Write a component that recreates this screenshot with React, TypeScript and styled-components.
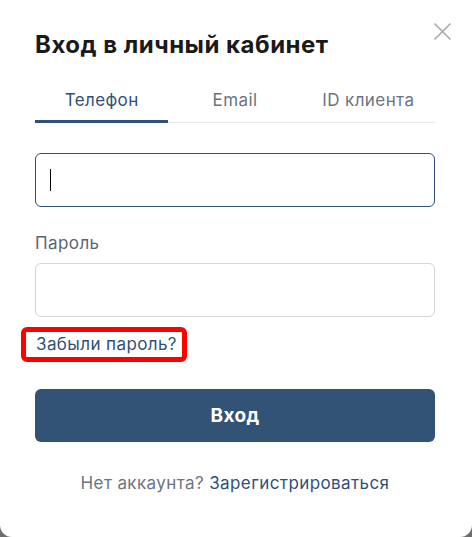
import styled, { createGlobalStyle } from 'styled-components';
import { useState } from 'react';

const Palette = {
  Blue: '#2f5078',
  Button: '#325276',
  Title: '#1a1a1a',
  Gray: '#6b7480',
  Label: '#5b6472',
  Line: '#e6e8eb',
  Border: '#d3d6dc',
  Close: '#a3a8b0',
};

const GlobalStyle = createGlobalStyle`
  html, body {
    margin: 0;
    padding: 0;
    background: #6e6e6e;
  }
  body {
    font-family: Inter, "Noto Sans", sans-serif;
    letter-spacing: 0.4px;
  }
  * { box-sizing: border-box; }
`;

const tabs = ['Телефон', 'Email', 'ID клиента'];

const App = () => {
  const [active, setActive] = useState(0);
  const [phone, setPhone] = useState('');

  return (
    <>
      <GlobalStyle />
      <Card>
        <Header>
          <Title>Вход в личный кабинет</Title>
          <Close aria-label="Закрыть">
            <svg width="19" height="19" viewBox="0 0 19 19">
              <path d="M1.5 1.5 L17.5 17.5 M17.5 1.5 L1.5 17.5" stroke={Palette.Close} strokeWidth="1.6" fill="none" />
            </svg>
          </Close>
        </Header>
        <Tabs>
          {tabs.map((t, i) => (
            <Tab key={t} $active={i === active} onClick={() => setActive(i)}>
              {t}
            </Tab>
          ))}
        </Tabs>
        <Form>
          <Field>
            <Input $focused value={phone} onChange={(e) => setPhone(e.target.value)} />
            {!phone && <Caret />}
          </Field>
          <Label>Пароль</Label>
          <Input type="password" />
          <ForgotRow>
            <Highlight>
              <Link href="#">Забыли пароль?</Link>
            </Highlight>
          </ForgotRow>
          <Submit>Вход</Submit>
        </Form>
        <Footer>
          Нет аккаунта? <Link href="#">Зарегистрироваться</Link>
        </Footer>
      </Card>
    </>
  );
};

export default App;

const Card = styled.div`
  width: 472px;
  height: 537px;
  background: #fff;
  border-radius: 0 0 12px 12px;
  padding: 28px 37px 0 35px;
`;
const Header = styled.div`
  display: flex;
  justify-content: space-between;
  align-items: flex-start;
`;
const Title = styled.h1`
  margin: 0;
  font-size: 24px;
  line-height: 34px;
  font-weight: 700;
  color: ${Palette.Title};
  letter-spacing: 0.5px;
`;
const Close = styled.button`
  border: none;
  background: none;
  padding: 0;
  margin: -6px -17px 0 0;
  width: 19px;
  height: 19px;
  cursor: pointer;
`;
const Tabs = styled.div`
  display: grid;
  grid-template-columns: repeat(3, 1fr);
  width: 400px;
  margin-top: 21px;
  border-bottom: 1px solid ${Palette.Line};
`;
const Tab = styled.div<{ $active?: boolean }>`
  text-align: center;
  font-size: 17px;
  line-height: 22px;
  padding: 6px 0 11px;
  color: ${(p) => (p.$active ? Palette.Blue : Palette.Gray)};
  box-shadow: ${(p) => (p.$active ? `inset 0 -3px 0 ${Palette.Blue}` : 'none')};
  margin-bottom: ${(p) => (p.$active ? '-1px' : '0')};
  cursor: pointer;
`;
const Form = styled.div`
  display: flex;
  flex-direction: column;
  width: 400px;
  margin-top: 30px;
`;
const Field = styled.div`
  position: relative;
`;
const Caret = styled.span`
  position: absolute;
  left: 15px;
  top: 16px;
  width: 1px;
  height: 22px;
  background: #000;
  pointer-events: none;
`;
const Input = styled.input<{ $focused?: boolean }>`
  display: block;
  width: 100%;
  height: 54px;
  border: 1px solid ${(p) => (p.$focused ? Palette.Blue : Palette.Border)};
  border-radius: 6px;
  padding: 0 14px;
  font-size: 17px;
  font-family: inherit;
  outline: none;
  caret-color: #000;
`;
const Label = styled.div`
  margin: 26px 0 10px;
  font-size: 17px;
  line-height: 20px;
  color: ${Palette.Label};
`;
const ForgotRow = styled.div`
  display: flex;
  margin: 15px 0 0 -9px;
`;
const Highlight = styled.span`
  outline: 5px solid #ff0000;
  border-radius: 1px;
  padding: 2px 5px 2px 10px;
`;
const Link = styled.a`
  color: ${Palette.Blue};
  text-decoration: none;
  font-size: 17px;
  line-height: 21px;
`;
const Submit = styled.button`
  margin-top: 32px;
  height: 53px;
  border: none;
  border-radius: 6px;
  background: ${Palette.Button};
  color: #fff;
  font-family: inherit;
  font-size: 19px;
  font-weight: 700;
  letter-spacing: 0.4px;
  cursor: pointer;
`;
const Footer = styled.div`
  width: 400px;
  margin-top: 31px;
  text-align: center;
  font-size: 17px;
  line-height: 20px;
  color: ${Palette.Gray};
`;
